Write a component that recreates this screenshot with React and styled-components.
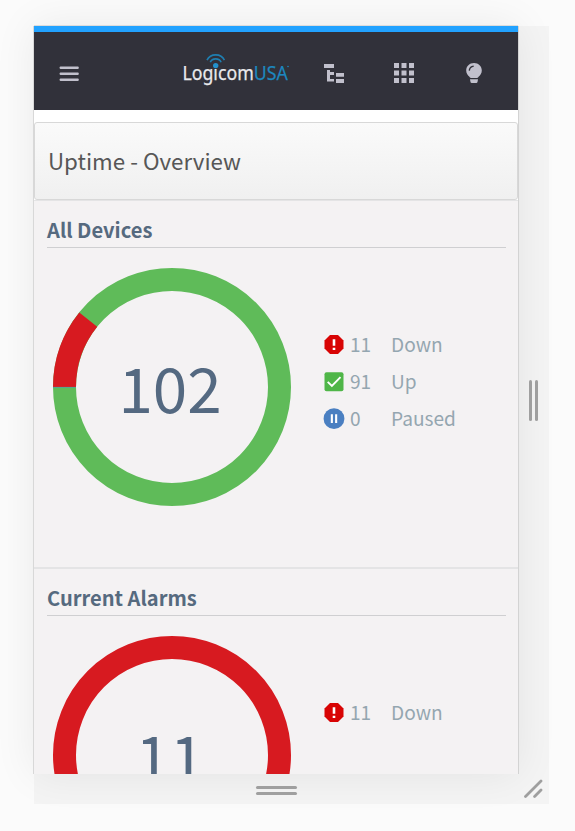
import React from "react";
import styled, { createGlobalStyle } from "styled-components";

const GlobalStyle = createGlobalStyle`
  *, *::before, *::after { box-sizing: border-box; }
  html, body { margin: 0; padding: 0; background: #fbfbfb; overflow: hidden; }
  body { font-family: "Noto Sans CJK SC", "Noto Sans", sans-serif; }
  svg { display: block; }
`;

const Page = styled.div`
  width: 575px;
  height: 831px;
  padding: 26px 0 0 34px;
  background: #fbfbfb;
  overflow: hidden;
`;

const Stage = styled.div`
  display: grid;
  grid-template-columns: 484px 31px;
  grid-template-rows: 748px 30px;
  width: 515px;
  background: #f4f4f4;
`;

const Handle = styled.div`
  display: flex;
  flex-direction: ${(p) => (p.$vertical ? "row" : "column")};
  align-items: center;
  justify-content: center;
  gap: 3px;
  padding-top: ${(p) => (p.$vertical ? "0" : "3px")};
`;

const Grip = styled.span`
  width: ${(p) => (p.$vertical ? "3px" : "41px")};
  height: ${(p) => (p.$vertical ? "41px" : "3px")};
  border-radius: 2px;
  background: #9f9f9f;
`;

const Corner = styled.div`
  padding: 5px 0 0 6px;
`;

const Device = styled.main`
  overflow: hidden;
  background: #fff;
  box-shadow: 0 -1px 0 #dcdcdc, -1px 0 0 #d8d8d8, 1px 0 0 #d3d3d3,
    0 0 40px rgba(0, 0, 0, 0.075);
`;

const Navbar = styled.header`
  display: flex;
  align-items: center;
  height: 84px;
  padding: 4px 36px 0 25px;
  border-top: 6px solid #22a2ff;
  background: #31313a;
  color: #c1c0cc;
`;

const NavButton = styled.button`
  display: flex;
  width: 20px;
  height: 20px;
  padding: 0;
  border: 0;
  background: none;
  color: inherit;
  margin-left: ${(p) => p.$gap || 0}px;
`;

const Brand = styled.div`
  width: 110px;
  height: 36px;
  margin: -10px 0 0 102px;
`;

const TitlePanel = styled.div`
  height: 78px;
  margin-top: 12px;
  padding: 0 13px;
  border: 1px solid #d8d8d8;
  border-radius: 3px;
  background: linear-gradient(#fafafa, #f0f0f0);
`;

const Title = styled.h1`
  margin: 0;
  color: #575757;
  font-size: 22.35px;
  font-weight: 400;
  line-height: 74px;
  white-space: nowrap;
`;

const Section = styled.section`
  height: 368px;
  padding: 0 12px 0 13px;
  border-top: ${(p) => (p.$first ? 1 : 2)}px solid #e4e4e5;
  margin-top: ${(p) => (p.$first ? 0 : -1)}px;
  background: #f4f2f3;
`;

const Heading = styled.h2`
  height: 47px;
  margin: 0;
  border-bottom: 1px solid #cfcfd1;
  color: #566a7f;
  font-size: 20.1px;
  font-weight: 700;
  line-height: 58px;
  white-space: nowrap;
`;

const Summary = styled.div`
  display: flex;
  padding: 20px 0 0 6px;
`;

const Gauge = styled.div`
  display: grid;
  width: 238px;
  height: 238px;
  > * { grid-area: 1 / 1; }
`;

const Total = styled.div`
  padding-right: 4px;
  color: #546981;
  font-size: 62px;
  line-height: 237px;
  text-align: center;
`;

const Legend = styled.ul`
  display: flex;
  flex-direction: column;
  margin: 58px 0 0 32px;
  padding: 0;
  list-style: none;
`;

const LegendRow = styled.li`
  display: grid;
  grid-template-columns: 27px 41px auto;
  align-items: center;
  height: 37px;
  color: #94a6b0;
  font-size: 19.1px;
  line-height: 37px;
`;

const STATUS_ICONS = {
  down: (
    <svg width="22" height="22" viewBox="0 0 22 22">
      <path d="M7 1h8l5.5 5.5v8L15 20H7l-5.5-5.5v-8z" fill="#d80404" />
      <path d="M9.7 5.3h2.6v6.5H9.7zM9.7 13.7h2.6v2.4H9.7z" fill="#fff" />
    </svg>
  ),
  up: (
    <svg width="22" height="22" viewBox="0 0 22 22">
      <rect x="1.5" y="1.2" width="19" height="19" rx="2" fill="#4fb648" />
      <path d="M4.7 10.8l4.2 4.2 8.600-8.800" fill="none" stroke="#fff" strokeWidth="1.9" />
    </svg>
  ),
  paused: (
    <svg width="22" height="22" viewBox="0 0 22 22">
      <circle cx="11" cy="10.7" r="10.4" fill="#4a7fc1" />
      <path d="M7.8 6.3h2.1v8.8H7.8zM12.1 6.3h2.1v8.8h-2.1z" fill="#fff" />
    </svg>
  ),
};

const point = (r, deg) => {
  const a = (deg * Math.PI) / 180;
  return `${119 - r * Math.cos(a)} ${119 - r * Math.sin(a)}`;
};

function Donut({ down, total }) {
  const angle = (down / total) * 360;
  const full = down === total;
  return (
    <svg width="238" height="238" viewBox="0 0 238 238">
      <circle cx="119" cy="119" r="107.5" fill="none" strokeWidth="23" stroke={full ? "#d71a20" : "#5fbb59"} />
      {!full && (
        <>
          <path
            d={`M${point(119, 0)}A119 119 0 0 1 ${point(119, angle)}L${point(96, angle)}A96 96 0 0 0 ${point(96, 0)}Z`}
            fill="#d71a20"
          />
          <path d="M0 119.4H23" stroke="#54a39a" strokeWidth="0.9" />
        </>
      )}
    </svg>
  );
}

function Logo() {
  return (
    <svg width="110" height="36" viewBox="181 50 110 36" fontFamily="Noto Sans, sans-serif">
      <text
        x="182.4"
        y="80.3"
        fontSize="20"
        fill="#e9e9ec"
        stroke="#e9e9ec"
        strokeWidth="0.25"
        textLength="105.4"
        lengthAdjust="spacingAndGlyphs"
      >
        Logicom<tspan fill="#1d87bf" stroke="#1d87bf">USA</tspan>
      </text>
      <circle cx="215.7" cy="65.6" r="2.7" fill="#2391cc" />
      <path d="M207 60.2Q209.500 54.900 215.700 54.900T224.400 60.200M210.300 62.200Q211.600 58.900 215.700 58.900T221.100 62.200" fill="none" stroke="#1f7fb1" strokeWidth="1.6" />
      <circle cx="288" cy="66.5" r="0.8" fill="#1d87bf" />
    </svg>
  );
}

function StatusSection({ title, total, down, items, first }) {
  return (
    <Section $first={first}>
      <Heading>{title}</Heading>
      <Summary>
        <Gauge>
          <Donut down={down} total={total} />
          <Total>{total}</Total>
        </Gauge>
        <Legend>
          {items.map(([kind, count, label]) => (
            <LegendRow key={kind}>
              {STATUS_ICONS[kind]}
              <span>{count}</span>
              <span>{label}</span>
            </LegendRow>
          ))}
        </Legend>
      </Summary>
    </Section>
  );
}

export default function App() {
  return (
    <Page>
      <GlobalStyle />
      <Stage>
        <Device>
          <Navbar>
            <NavButton aria-label="Menu">
              <svg width="20" height="20" viewBox="0 0 20 20" fill="currentColor">
                <rect x="0.7" y="3.5" width="19" height="2.6" rx="0.8" />
                <rect x="0.7" y="9.4" width="19" height="2.6" rx="0.8" />
                <rect x="0.7" y="15.4" width="19" height="2.6" rx="0.8" />
              </svg>
            </NavButton>
            <Brand><Logo /></Brand>
            <NavButton $gap={33} aria-label="Device tree">
              <svg width="20" height="20" viewBox="0 0 20 20" fill="currentColor">
                <path d="M0 1h10v4H0zM3 7h3v2h4v3H6v4h4v2.400H3zM12 10h8v3.700h-8zM12 16h8v4h-8z" />
              </svg>
            </NavButton>
            <NavButton $gap={50} aria-label="Apps">
              <svg width="20" height="20" viewBox="0 0 20 20" fill="currentColor">
                <path d="M0 0h5v5H0zM7.5 0h5v5h-5zM15 0h5v5h-5zM0 7.5h5v5H0zM7.5 7.5h5v5h-5zM15 7.5h5v5h-5zM0 15h5v5H0zM7.5 15h5v5h-5zM15 15h5v5h-5z" />
              </svg>
            </NavButton>
            <NavButton $gap={50} aria-label="Hints">
              <svg width="20" height="20" viewBox="0 0 20 20" fill="currentColor">
                <path d="M10 0C5.500 0 2.200 3.300 2.200 7.500c0 2.900 1.500 4.700 3 6.100.6.600.8 1.400 1.800 1.400h6c1 0 1.200-.8 1.800-1.400 1.500-1.400 3-3.200 3-6.100C17.800 3.300 14.500 0 10 0z" />
                <path d="M6 16.300h8l-.5 2.700q-.2 1-1.200 1H7.700q-1 0-1.200-1z" />
                <path d="M5.300 7.600Q5.600 3.700 9.700 3.100" fill="none" stroke="#31313a" strokeWidth="1.4" />
              </svg>
            </NavButton>
          </Navbar>
          <TitlePanel><Title>Uptime - Overview</Title></TitlePanel>
          <StatusSection
            first
            title="All Devices"
            total={102}
            down={11}
            items={[["down", 11, "Down"], ["up", 91, "Up"], ["paused", 0, "Paused"]]}
          />
          <StatusSection title="Current Alarms" total={11} down={11} items={[["down", 11, "Down"]]} />
        </Device>
        <Handle $vertical><Grip $vertical /><Grip $vertical /></Handle>
        <Handle><Grip /><Grip /></Handle>
        <Corner>
          <svg width="20" height="20" viewBox="0 0 20 20" stroke="#9f9f9f" strokeWidth="2.8" strokeLinecap="round">
            <path d="M1.500 17.500L17 2M10.600 17.500L17 11.100" />
          </svg>
        </Corner>
      </Stage>
    </Page>
  );
}
